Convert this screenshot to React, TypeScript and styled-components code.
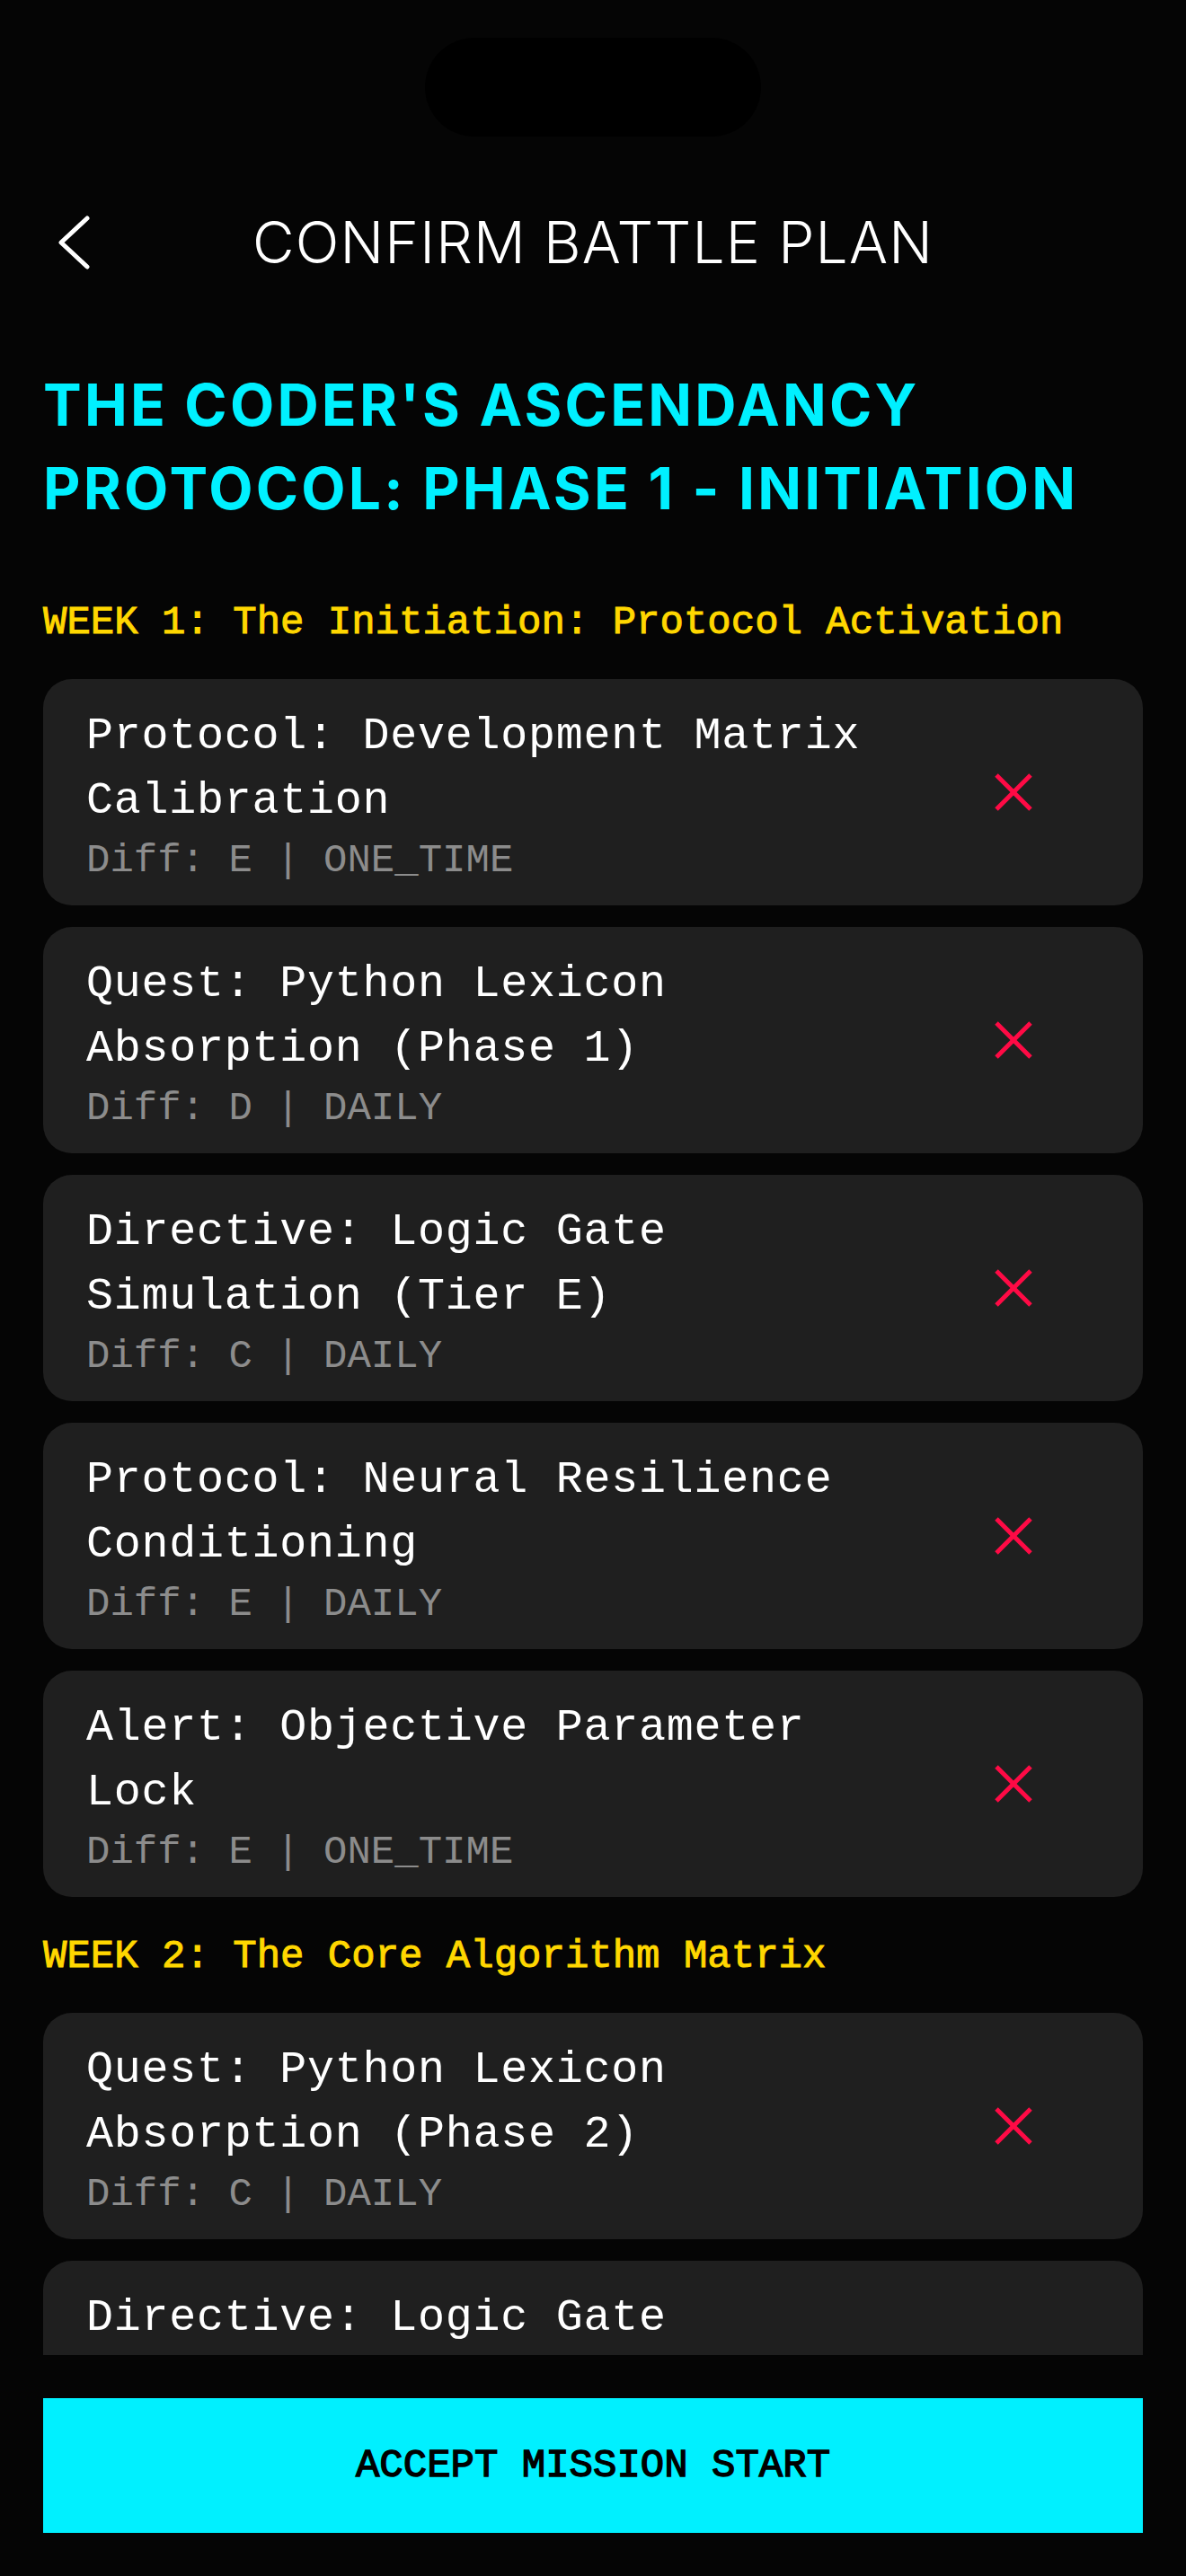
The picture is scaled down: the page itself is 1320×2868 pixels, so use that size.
import React from "react";
import styled, { createGlobalStyle } from "styled-components";

const GlobalStyle = createGlobalStyle`
  html, body {
    margin: 0;
    padding: 0;
    background: #050505;
  }
  * { box-sizing: border-box; }
`;

const MONO = `"Liberation Mono", "DejaVu Sans Mono", monospace`;
const SANS = `Inter, "Noto Sans", "Liberation Sans", sans-serif`;

const Page = styled.div`
  width: 1320px;
  height: 2868px;
  display: flex;
  flex-direction: column;
  overflow: hidden;
  background: #050505;
`;

const StatusBar = styled.div`
  height: 230px;
  flex-shrink: 0;
  display: flex;
  justify-content: center;
  padding-top: 42px;
`;

const Island = styled.div`
  width: 374px;
  height: 110px;
  border-radius: 55px;
  background: #000000;
`;

const Header = styled.header`
  height: 80px;
  flex-shrink: 0;
  display: grid;
  grid-template-columns: 1fr auto 1fr;
  align-items: center;
  padding: 0 48px;
`;

const BackButton = styled.button`
  justify-self: start;
  background: none;
  border: none;
  padding: 0 0 0 12px;
  margin: 0;
  display: flex;
  align-items: center;
  cursor: pointer;
`;

const Title = styled.h1`
  margin: 0;
  font-family: ${SANS};
  font-weight: 300;
  font-size: 64px;
  line-height: 80px;
  color: #ffffff;
  letter-spacing: 1.2px;
  white-space: nowrap;
`;

const Scroll = styled.main`
  flex: 1;
  min-height: 0;
  overflow: hidden;
  padding: 94px 48px 0;
  display: flex;
  flex-direction: column;
`;

const Headline = styled.h2`
  margin: 0 0 73px;
  font-family: ${SANS};
  font-weight: 700;
  font-size: 64px;
  line-height: 93px;
  letter-spacing: 3.2px;
  color: #00f0ff;
`;

const Weeks = styled.div`
  display: flex;
  flex-direction: column;
  gap: 36px;
`;

const Week = styled.section`
  display: flex;
  flex-direction: column;
`;

const WeekHeading = styled.h3`
  margin: 0 0 33px;
  font-family: ${MONO};
  font-weight: 400;
  font-size: 44px;
  line-height: 60px;
  color: #ffd700;
  -webkit-text-stroke: 1px #ffd700;
`;

const CardList = styled.div`
  display: flex;
  flex-direction: column;
  gap: 24px;
`;

const Card = styled.div`
  background: #1f1f1f;
  border-radius: 32px;
  padding: 28px 48px 20px 48px;
  display: flex;
  align-items: center;
`;

const CardText = styled.div`
  flex: 1;
  min-width: 0;
`;

const TaskName = styled.div`
  font-family: ${MONO};
  font-size: 50px;
  line-height: 72px;
  letter-spacing: 0.75px;
  color: #ffffff;
`;

const TaskMeta = styled.div`
  font-family: ${MONO};
  font-size: 44px;
  line-height: 60px;
  color: #8c8c8c;
  white-space: nowrap;
`;

const RemoveButton = styled.button`
  width: 192px;
  flex-shrink: 0;
  margin-top: -8px;
  background: none;
  border: none;
  padding: 0;
  display: flex;
  justify-content: center;
  align-items: center;
  cursor: pointer;
`;

const Footer = styled.footer`
  flex-shrink: 0;
  padding: 48px;
`;

const AcceptButton = styled.button`
  width: 100%;
  height: 150px;
  border: none;
  border-radius: 0;
  background: #00f0ff;
  color: #000000;
  font-family: ${MONO};
  font-weight: 400;
  font-size: 44px;
  letter-spacing: 0;
  -webkit-text-stroke: 1.4px #000000;
  cursor: pointer;
`;

type Task = { name: string; diff: string; freq: string };
type WeekData = { title: string; tasks: Task[] };

const weeks: WeekData[] = [
  {
    title: "WEEK 1: The Initiation: Protocol Activation",
    tasks: [
      { name: "Protocol: Development Matrix Calibration", diff: "E", freq: "ONE_TIME" },
      { name: "Quest: Python Lexicon Absorption (Phase 1)", diff: "D", freq: "DAILY" },
      { name: "Directive: Logic Gate Simulation (Tier E)", diff: "C", freq: "DAILY" },
      { name: "Protocol: Neural Resilience Conditioning", diff: "E", freq: "DAILY" },
      { name: "Alert: Objective Parameter Lock", diff: "E", freq: "ONE_TIME" },
    ],
  },
  {
    title: "WEEK 2: The Core Algorithm Matrix",
    tasks: [
      { name: "Quest: Python Lexicon Absorption (Phase 2)", diff: "C", freq: "DAILY" },
      { name: "Directive: Logic Gate Simulation (Tier D)", diff: "C", freq: "DAILY" },
      { name: "Protocol: Neural Resilience Conditioning", diff: "D", freq: "DAILY" },
    ],
  },
];

const ChevronLeft = () => (
  <svg width="44" height="64" viewBox="0 0 44 64" fill="none">
    <polyline
      points="37,5 8,32 37,59"
      stroke="#ffffff"
      strokeWidth="5"
      strokeLinecap="round"
      strokeLinejoin="round"
    />
  </svg>
);

const CrossIcon = () => (
  <svg width="44" height="42" viewBox="0 0 44 42" fill="none">
    <line x1="3" y1="2" x2="41" y2="40" stroke="#ff0a45" strokeWidth="5" />
    <line x1="41" y1="2" x2="3" y2="40" stroke="#ff0a45" strokeWidth="5" />
  </svg>
);

export default function App() {
  return (
    <>
      <GlobalStyle />
      <Page>
        <StatusBar>
          <Island />
        </StatusBar>
        <Header>
          <BackButton aria-label="Back">
            <ChevronLeft />
          </BackButton>
          <Title>CONFIRM BATTLE PLAN</Title>
          <span />
        </Header>
        <Scroll>
          <Headline>THE CODER'S ASCENDANCY PROTOCOL: PHASE 1 - INITIATION</Headline>
          <Weeks>
            {weeks.map((w) => (
              <Week key={w.title}>
                <WeekHeading>{w.title}</WeekHeading>
                <CardList>
                  {w.tasks.map((t, i) => (
                    <Card key={i}>
                      <CardText>
                        <TaskName>{t.name}</TaskName>
                        <TaskMeta>
                          Diff: {t.diff} | {t.freq}
                        </TaskMeta>
                      </CardText>
                      <RemoveButton aria-label="Remove">
                        <CrossIcon />
                      </RemoveButton>
                    </Card>
                  ))}
                </CardList>
              </Week>
            ))}
          </Weeks>
        </Scroll>
        <Footer>
          <AcceptButton>ACCEPT MISSION START</AcceptButton>
        </Footer>
      </Page>
    </>
  );
}
